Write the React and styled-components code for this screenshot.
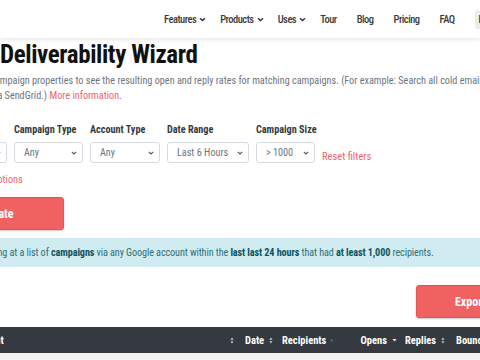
import React from "react";
import styled, { createGlobalStyle } from "styled-components";

const FONT = `Roboto, "Liberation Sans", Arial, sans-serif`;

const GlobalStyle = createGlobalStyle`
  html, body { margin: 0; padding: 0; background: #fff; }
  body { font-family: ${FONT}; font-stretch: 75%; }
  button { font-stretch: 75%; }
`;

const Page = styled.div`
  width: 480px;
  height: 360px;
  overflow: hidden;
  background: #fff;
`;

const NavBar = styled.nav`
  height: 38px;
  display: flex;
  align-items: center;
  padding-left: 154px;
  background: #fff;
  box-shadow: 0 2px 4px rgba(0, 0, 0, 0.09);
  position: relative;
  z-index: 1;
`;

const NavItem = styled.a`
  display: flex;
  align-items: center;
  gap: 3px;
  padding: 0 ${(p) => (p.$dropdown ? "4px" : "10px")} 0 10px;
  font-size: 10.5px;
  font-weight: 500;
  letter-spacing: -0.5px;
  color: #3a3a3a;
  white-space: nowrap;
`;

const LoginButton = styled.a`
  margin-left: 10px;
  padding: 3px 4px;
  border-radius: 3px;
  background: #ececec;
  font-size: 10.5px;
  font-weight: 500;
  color: #333;
  white-space: nowrap;
`;

const Main = styled.main`
  margin-left: -40px;
  width: 600px;
  display: flex;
  flex-direction: column;
`;

const Title = styled.h1`
  margin: 3px 0 0 40px;
  font-size: 25px;
  line-height: 28px;
  font-weight: 700;
  letter-spacing: -0.4px;
  color: #111;
  white-space: nowrap;
`;

const Lead = styled.p`
  margin: 4px 0 0 11px;
  text-indent: -8px;
  font-size: 10.2px;
  line-height: 15px;
  color: #6c757d;
  white-space: nowrap;
`;

const TextLink = styled.a`
  color: #f2626a;
  text-decoration: none;
`;

const FilterRow = styled.div`
  margin-top: 21px;
  display: flex;
  gap: 7px;
  align-items: flex-end;
`;

const FilterGroup = styled.div`
  display: flex;
  flex-direction: column;
  gap: 6px;
  width: ${(p) => p.$w}px;
`;

const Label = styled.label`
  font-size: 10.2px;
  line-height: 12px;
  font-weight: 700;
  color: #343a40;
  white-space: nowrap;
`;

const SelectBox = styled.div`
  height: 21px;
  box-sizing: border-box;
  border: 1px solid #d6dadf;
  border-radius: 3px;
  display: flex;
  align-items: center;
  justify-content: space-between;
  padding: 0 5px 0 9px;
  font-size: 10.2px;
  color: #6c757d;
  background: #fff;
  white-space: nowrap;
`;

const ResetLink = styled(TextLink)`
  font-size: 10.5px;
  line-height: 15px;
  margin-bottom: -1px;
  white-space: nowrap;
`;

const OptionsLink = styled(TextLink)`
  margin: 9px 0 0 6px;
  font-size: 10.2px;
  line-height: 15px;
  white-space: nowrap;
`;

const PrimaryButton = styled.button`
  height: 33px;
  width: ${(p) => p.$w}px;
  margin-left: ${(p) => p.$bleed || 0}px;
  box-sizing: border-box;
  border: 1px solid #e35555;
  border-radius: 3px;
  background: #f06262;
  box-shadow: 0 1px 2px rgba(0, 0, 0, 0.22);
  color: #fff;
  font-family: ${FONT};
  font-size: 12px;
  font-weight: 700;
  padding: 0;
  white-space: nowrap;
`;

const CalcButton = styled(PrimaryButton)`
  margin-top: 10px;
  align-self: flex-start;
`;

const Alert = styled.div`
  margin-top: 8px;
  height: 29px;
  line-height: 29px;
  padding: 0 16px;
  background: #d1ecf1;
  color: #2f6f78;
  font-size: 10.2px;
  letter-spacing: -0.1px;
  white-space: nowrap;
  b { color: #0c5460; font-weight: 700; }
`;

const ExportRow = styled.div`
  margin-top: 18px;
  display: flex;
  justify-content: flex-end;
  padding-right: 35px;
`;

const TableHead = styled.div`
  margin-top: 9px;
  height: 26px;
  background: #343a40;
  display: grid;
  grid-template-columns: 278px 40px 60px 63px 49px 1fr;
  align-items: center;
  color: #fff;
  font-size: 10.5px;
  font-weight: 700;
`;

const Th = styled.div`
  display: flex;
  align-items: center;
  gap: 5px;
  white-space: nowrap;
  justify-content: ${(p) => p.$justify || "flex-start"};
  padding: 0 ${(p) => p.$pr ?? 5}px 0 ${(p) => p.$pl ?? 4}px;
`;

const StripeRow = styled.div`
  height: 10px;
  background: #f2f2f2;
`;

const Chevron = () => (
  <svg width="7" height="5" viewBox="0 0 7 5">
    <path d="M1 1.2 L3.5 3.6 L6 1.2" fill="none" stroke="#333" strokeWidth="1.4" />
  </svg>
);

const SelectChevron = () => (
  <svg width="6" height="4" viewBox="0 0 6 4">
    <path d="M0.8 0.8 L3 3 L5.2 0.8" fill="none" stroke="#555" strokeWidth="1.1" />
  </svg>
);

const SortIcon = () => (
  <svg width="4" height="7" viewBox="0 0 4 7">
    <path d="M2 0.5 L3.6 2.8 H0.4 Z M2 6.5 L3.6 4.2 H0.4 Z" fill="#c8ccd0" />
  </svg>
);

const CaretDown = () => (
  <svg width="5" height="4" viewBox="0 0 5 4">
    <path d="M0.3 1 H4.7 L2.5 3.4 Z" fill="#e8e8e8" />
  </svg>
);

const filters = [
  { label: "ESP", value: "Any", w: 47 },
  { label: "Campaign Type", value: "Any", w: 69 },
  { label: "Account Type", value: "Any", w: 70 },
  { label: "Date Range", value: "Last 6 Hours", w: 82 },
  { label: "Campaign Size", value: "> 1000", w: 59 },
];

export default function App() {
  return (
    <Page>
      <GlobalStyle />
      <NavBar>
        <NavItem $dropdown>Features <Chevron /></NavItem>
        <NavItem $dropdown>Products <Chevron /></NavItem>
        <NavItem $dropdown>Uses <Chevron /></NavItem>
        <NavItem>Tour</NavItem>
        <NavItem>Blog</NavItem>
        <NavItem>Pricing</NavItem>
        <NavItem>FAQ</NavItem>
        <LoginButton>Log in</LoginButton>
      </NavBar>
      <Main>
        <Title>Deliverability Wizard</Title>
        <Lead>
          Select campaign properties to see the resulting open and reply rates for matching campaigns. (For example: Search all cold email campaigns
          <br />
          sent via SendGrid.) <TextLink>More information</TextLink>.
        </Lead>
        <FilterRow>
          {filters.map((f) => (
            <FilterGroup key={f.label} $w={f.w}>
              <Label>{f.label}</Label>
              <SelectBox>
                <span>{f.value}</span>
                <SelectChevron />
              </SelectBox>
            </FilterGroup>
          ))}
          <ResetLink>Reset filters</ResetLink>
        </FilterRow>
        <OptionsLink>Fewer options</OptionsLink>
        <CalcButton $w={146} $bleed={-42}>Calculate</CalcButton>
        <Alert>
          Looking at a list of <b>campaigns</b> via any Google account within the <b>last last 24 hours</b> that had{" "}
          <b>at least 1,000</b> recipients.
        </Alert>
        <ExportRow>
          <PrimaryButton $w={109}>Export</PrimaryButton>
        </ExportRow>
        <TableHead>
          <Th $justify="space-between" $pl={9} $pr={4}>
            <span>Account</span>
            <SortIcon />
          </Th>
          <Th $pl={7}>Date <SortIcon /></Th>
          <Th>Recipients <SortIcon /></Th>
          <Th $justify="flex-end" $pr={4}>Opens <CaretDown /></Th>
          <Th>Replies <SortIcon /></Th>
          <Th $pl={6}>Bounces <SortIcon /></Th>
        </TableHead>
        <StripeRow />
      </Main>
    </Page>
  );
}
